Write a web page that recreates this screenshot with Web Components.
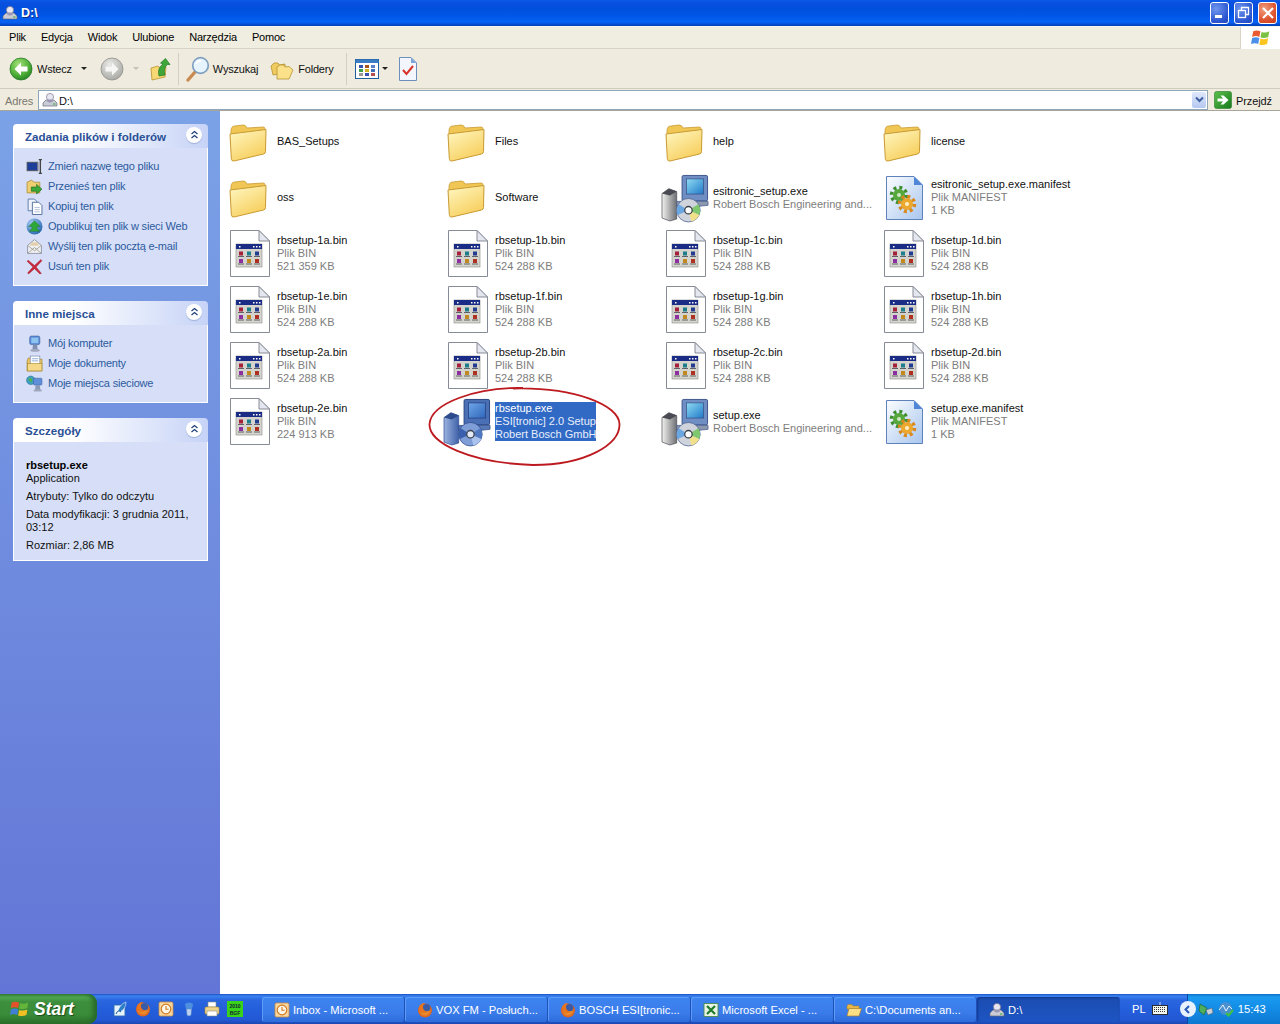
<!DOCTYPE html>
<html lang="pl">
<head>
<meta charset="utf-8">
<title>D:\</title>
<style>
    html, body { margin: 0; padding: 0; overflow: hidden; background: #fff; }
    body { font: 11px "Liberation Sans", Arial, sans-serif; color: #000; }
</style>
</head>
<body>
<xp-window>
    <xp-titlebar slot="title">D:\</xp-titlebar>
    <xp-menubar slot="menu">
        <span>Plik</span><span>Edycja</span><span>Widok</span><span>Ulubione</span><span>Narzędzia</span><span>Pomoc</span>
    </xp-menubar>
    <xp-toolbar slot="tools"></xp-toolbar>
    <xp-addressbar slot="address">D:\</xp-addressbar>
    <xp-sidebar slot="side">
        <xp-task-panel heading="Zadania plików i folderów" pad="8px 0 9px">
            <xp-task-link icon="rename">Zmień nazwę tego pliku</xp-task-link>
            <xp-task-link icon="move">Przenieś ten plik</xp-task-link>
            <xp-task-link icon="copy">Kopiuj ten plik</xp-task-link>
            <xp-task-link icon="publish">Opublikuj ten plik w sieci Web</xp-task-link>
            <xp-task-link icon="mail">Wyślij ten plik pocztą e-mail</xp-task-link>
            <xp-task-link icon="del">Usuń ten plik</xp-task-link>
        </xp-task-panel>
        <xp-task-panel heading="Inne miejsca" pad="8px 0 9px">
            <xp-task-link icon="computer">Mój komputer</xp-task-link>
            <xp-task-link icon="docs">Moje dokumenty</xp-task-link>
            <xp-task-link icon="network">Moje miejsca sieciowe</xp-task-link>
        </xp-task-panel>
        <xp-task-panel heading="Szczegóły" pad="17px 0 8px">
            <xp-details></xp-details>
        </xp-task-panel>
    </xp-sidebar>
    <xp-files slot="files">
        <xp-file icon="folder">BAS_Setups</xp-file>
        <xp-file icon="folder">Files</xp-file>
        <xp-file icon="folder">help</xp-file>
        <xp-file icon="folder">license</xp-file>
        <xp-file icon="folder">oss</xp-file>
        <xp-file icon="folder">Software</xp-file>
        <xp-file icon="setup" line2="Robert Bosch Engineering and...">esitronic_setup.exe</xp-file>
        <xp-file icon="manifest" line2="Plik MANIFEST" line3="1 KB">esitronic_setup.exe.manifest</xp-file>
        <xp-file icon="bin" line2="Plik BIN" line3="521 359 KB">rbsetup-1a.bin</xp-file>
        <xp-file icon="bin" line2="Plik BIN" line3="524 288 KB">rbsetup-1b.bin</xp-file>
        <xp-file icon="bin" line2="Plik BIN" line3="524 288 KB">rbsetup-1c.bin</xp-file>
        <xp-file icon="bin" line2="Plik BIN" line3="524 288 KB">rbsetup-1d.bin</xp-file>
        <xp-file icon="bin" line2="Plik BIN" line3="524 288 KB">rbsetup-1e.bin</xp-file>
        <xp-file icon="bin" line2="Plik BIN" line3="524 288 KB">rbsetup-1f.bin</xp-file>
        <xp-file icon="bin" line2="Plik BIN" line3="524 288 KB">rbsetup-1g.bin</xp-file>
        <xp-file icon="bin" line2="Plik BIN" line3="524 288 KB">rbsetup-1h.bin</xp-file>
        <xp-file icon="bin" line2="Plik BIN" line3="524 288 KB">rbsetup-2a.bin</xp-file>
        <xp-file icon="bin" line2="Plik BIN" line3="524 288 KB">rbsetup-2b.bin</xp-file>
        <xp-file icon="bin" line2="Plik BIN" line3="524 288 KB">rbsetup-2c.bin</xp-file>
        <xp-file icon="bin" line2="Plik BIN" line3="524 288 KB">rbsetup-2d.bin</xp-file>
        <xp-file icon="bin" line2="Plik BIN" line3="224 913 KB">rbsetup-2e.bin</xp-file>
        <xp-file icon="setup-sel" selected line2="ESI[tronic] 2.0 Setup" line3="Robert Bosch GmbH">rbsetup.exe</xp-file>
        <xp-file icon="setup" line2="Robert Bosch Engineering and...">setup.exe</xp-file>
        <xp-file icon="manifest" line2="Plik MANIFEST" line3="1 KB">setup.exe.manifest</xp-file>
    </xp-files>
    <xp-taskbar slot="tasks">
        <xp-task-button icon="clock">Inbox - Microsoft ...</xp-task-button>
        <xp-task-button icon="firefox">VOX FM - Posłuch...</xp-task-button>
        <xp-task-button icon="firefox">BOSCH ESI[tronic...</xp-task-button>
        <xp-task-button icon="excel">Microsoft Excel - ...</xp-task-button>
        <xp-task-button icon="openfolder">C:\Documents an...</xp-task-button>
        <xp-task-button icon="drive" active>D:\</xp-task-button>
    </xp-taskbar>
</xp-window>

<script>
function setupIcon(sel) {
    var c = sel
        ? { tw1: '#9db4e0', tw2: '#3f62a8', top: '#2c4a8c', mon: '#4a6fb5', edge: '#26427f', s1: '#6fa6e8', s2: '#2f66bb', base: '#5878b8', cd: '#7f9ed8', w1: '#4f78c0', w2: '#a9c2ee', w3: '#3a60ad', hole: '#e3ebf8' }
        : { tw1: '#f2f2ef', tw2: '#6f7074', top: '#4a4b52', mon: '#6f8fc4', edge: '#3d5488', s1: '#8fdcf4', s2: '#1f78c8', base: '#8c98ad', cd: '#cfd3dc', w1: '#7fc86f', w2: '#f0e08a', w3: '#6aa6e0', hole: '#ffffff' };
    return `<defs>
        <linearGradient id="tw" x1="0" x2="1" y1="0" y2="0"><stop offset="0" stop-color="${c.tw1}"/><stop offset="1" stop-color="${c.tw2}"/></linearGradient>
        <linearGradient id="sc" x1="0" x2="1" y1="0" y2="1"><stop offset="0" stop-color="${c.s1}"/><stop offset="1" stop-color="${c.s2}"/></linearGradient>
    </defs>
    <path d="M0 21 L7 16 L15 19 V47 L8 49 L0 46Z" fill="url(#tw)" stroke="${c.top}" stroke-width=".7"/>
    <path d="M0 21 L7 16 L15 19 L8 23Z" fill="${c.top}"/>
    <rect x="20.5" y="2.5" width="26" height="26" rx="1.5" fill="${c.mon}" stroke="${c.edge}"/>
    <rect x="25" y="6" width="17.5" height="15.5" fill="url(#sc)" stroke="${c.edge}" stroke-width=".8"/>
    <path d="M15 29 H47 V33 L38 34 H15Z" fill="${c.base}" stroke="${c.edge}" stroke-width=".7"/>
    <circle cx="27" cy="38" r="12" fill="${c.cd}" stroke="${c.edge}" stroke-width=".7"/>
    <path d="M27 38 L37 32 A12 12 0 0 1 38 43Z" fill="${c.w1}"/>
    <path d="M27 38 L38 43 A12 12 0 0 1 30 49.5Z" fill="${c.w2}"/>
    <path d="M27 38 L17 32 A12 12 0 0 0 16 43Z" fill="${c.w3}"/>
    <circle cx="27" cy="38" r="3.8" fill="${c.hole}" stroke="#3b3f4c" stroke-width="1.3"/>`;
}

var ICONS = {
    folder: [48, `<defs><linearGradient id="f" x1="0" x2=".6" y1="0" y2="1"><stop offset="0" stop-color="#fff8c4"/><stop offset="1" stop-color="#f7cf5e"/></linearGradient></defs>
        <path d="M5 14 Q5 9 9 9 L17 8 Q20 8 21 11 L37 10 Q39 10 39 12 V22 L5 24Z" fill="#f0c654" stroke="#c99a32" stroke-width=".8"/>
        <path d="M4 17 L40 12.5 L39.5 34.5 Q39.5 36.5 37.5 37 L8 44 Q5.5 44.5 5.3 41.5Z" fill="url(#f)" stroke="#c99a32"/>`],
    bin: [48, `<path d="M4.5 1.5 H33 L43.5 12 V47.5 H4.5Z" fill="#fff" stroke="#878b96"/>
        <path d="M33 1.5 V12 H43.5Z" fill="#e4e7ef" stroke="#878b96"/>
        <rect x="10" y="15" width="26" height="23" fill="#d4d3cd" stroke="#8a8a86" stroke-width=".6"/>
        <rect x="10" y="15" width="26" height="5" fill="#1b2c86"/>
        <path d="M13 17h1.5v1.5h-1.5zM27 17h1.5v1.5h-1.5zM30 17h1.5v1.5h-1.5zM33 17h1.5v1.5h-1.5z" fill="#fff"/>
        <rect x="13" y="22.5" width="4" height="4" fill="#a3213a"/><rect x="21" y="22.5" width="4" height="4" fill="#1e7f8c"/><rect x="29" y="22.5" width="4" height="4" fill="#243c8f"/>
        <rect x="13" y="30" width="4" height="4" fill="#8c2fa0"/><rect x="21" y="30" width="4" height="4" fill="#c08a20"/><rect x="29" y="30" width="4" height="4" fill="#b03020"/>
        <path d="M12 27.5h6M20 27.5h6M28 27.5h6M12 35h6M20 35h6M28 35h6" stroke="#55555a" stroke-width=".9"/>`],
    setup: [49, setupIcon(false)],
    'setup-sel': [49, setupIcon(true)],
    manifest: [48, `<defs><linearGradient id="p" x1="0" x2="1" y1="0" y2="1"><stop offset="0" stop-color="#fbfdff"/><stop offset="1" stop-color="#a9c6ee"/></linearGradient></defs>
        <path d="M6.5 3.5 H34 L42.5 12 V46.5 H6.5Z" fill="url(#p)" stroke="#5f82ba"/>
        <path d="M34 3.5 V12 H42.5Z" fill="#4f86d8"/>
        <circle cx="19" cy="22" r="6" fill="#57a83c"/><circle cx="19" cy="22" r="7.5" fill="none" stroke="#3f8f2e" stroke-width="3.5" stroke-dasharray="3 2.9"/>
        <circle cx="19" cy="22" r="2" fill="#cfe8c0"/>
        <circle cx="27" cy="31" r="6" fill="#eda92f"/><circle cx="27" cy="31" r="7.5" fill="none" stroke="#d9891c" stroke-width="3.5" stroke-dasharray="3 2.9"/>
        <circle cx="27" cy="31" r="2" fill="#fff0c8"/>`],
    drive: [16, `<path d="M1 11 L4 8 H12 L15 11 V14 H1Z" fill="#c9ccd6" stroke="#666a78" stroke-width=".7"/>
        <circle cx="8" cy="5" r="3.6" fill="#e8e6f0" stroke="#7e7a92" stroke-width=".7"/>
        <path d="M5 9.5 Q8 11.5 11 9.5 L9.5 7.5 H6.5Z" fill="#9a96b4"/>
        <path d="M11 12h2.5" stroke="#3a3" stroke-width="1"/>`],
    back: [24, `<defs><radialGradient id="g" cx=".4" cy=".3" r=".8"><stop offset="0" stop-color="#a5e27a"/><stop offset=".6" stop-color="#4cae35"/><stop offset="1" stop-color="#1c7a1e"/></radialGradient></defs>
        <circle cx="12" cy="12" r="11" fill="url(#g)" stroke="#2a7a2a" stroke-width=".8"/>
        <path d="M5.5 12 L12 5.5 V9.5 H18.5 V14.5 H12 V18.5Z" fill="#fff"/>`],
    forward: [24, `<defs><radialGradient id="g" cx=".4" cy=".3" r=".8"><stop offset="0" stop-color="#e9e9e6"/><stop offset="1" stop-color="#a2a29e"/></radialGradient></defs>
        <circle cx="12" cy="12" r="11" fill="url(#g)" stroke="#8f8f8c" stroke-width=".8"/>
        <path d="M18.5 12 L12 5.5 V9.5 H5.5 V14.5 H12 V18.5Z" fill="#f6f6f4"/>`],
    up: [24, `<path d="M3 11 L10 9 L12 11 L18 10 L17 20 L4 23Z" fill="#f8d874" stroke="#b8922e" stroke-width=".8"/>
        <path d="M11 19 Q9 11 15 7 L12.5 6 L17.5 1.5 L22 7.5 L19.5 7.5 Q15 11 17 18Z" fill="#3fa63a" stroke="#1f7a22" stroke-width=".7"/>`],
    search: [26, `<path d="M3 24 L10 16" stroke="#c98a50" stroke-width="3.4" stroke-linecap="round"/>
        <circle cx="15.5" cy="9.5" r="7.8" fill="#e6f4fd" stroke="#7f9fc0" stroke-width="1.7"/>
        <path d="M11 8 Q12.5 5 16 4.8" stroke="#fff" stroke-width="1.6" fill="none"/>`],
    folders: [24, `<path d="M1 9 L4 6 L8 6 L9 8 L15 7 V16 L3 18Z" fill="#f0cb62" stroke="#b8922e" stroke-width=".8"/>
        <path d="M7 10 L10 8 L14 8 L15 10 L19 9.5 L23 13 L19 22 L7 22Z" fill="#fbe18a" stroke="#b8922e" stroke-width=".8"/>`],
    views: [24, `<rect x=".5" y="2.5" width="23" height="19" fill="#fff" stroke="#1f5f9f"/><rect x=".5" y="2.5" width="23" height="3.5" fill="#3b7cc4"/>
        <g><rect x="4" y="8" width="4" height="3" fill="#3a50b0"/><rect x="10" y="8" width="4" height="3" fill="#a8541e"/><rect x="16" y="8" width="4" height="3" fill="#5a7fc8"/>
        <rect x="4" y="12" width="4" height="3" fill="#3ea04a"/><rect x="10" y="12" width="4" height="3" fill="#d4b21e"/><rect x="16" y="12" width="4" height="3" fill="#3f6fb8"/>
        <rect x="4" y="16" width="4" height="3" fill="#9a9a9a"/><rect x="10" y="16" width="4" height="3" fill="#3a50b0"/><rect x="16" y="16" width="4" height="3" fill="#b05050"/></g>`],
    check: [24, `<path d="M3.5 .5 H15 L20.5 6 V23.5 H3.5Z" fill="#f3f7fd" stroke="#6d8fbe"/>
        <path d="M15 .5 V6 H20.5Z" fill="#7ba6dc"/>
        <path d="M7 13 L10.5 17 L17 9" fill="none" stroke="#d8322a" stroke-width="2"/>`],
    go: [18, `<defs><linearGradient id="g" x1="0" x2="1" y1="0" y2="1"><stop offset="0" stop-color="#5cc04c"/><stop offset="1" stop-color="#157a1a"/></linearGradient></defs>
        <rect x=".5" y=".5" width="17" height="17" rx="2" fill="url(#g)" stroke="#2a7a2a" stroke-width=".6"/>
        <path d="M3.5 7.5 H9 L6.5 4.5 H9.5 L14.5 9 L9.5 13.5 H6.5 L9 10.5 H3.5Z" fill="#fff"/>`],
    rename: [16, `<rect x="1" y="4" width="10" height="8" fill="#1d3f9a" stroke="#555" stroke-width=".8"/>
        <path d="M12 1.5h3M13.5 1.5v13M12 14.5h3" stroke="#444" stroke-width="1.3"/><path d="M11 4h1.5v8H11" fill="#aab"/>`],
    move: [16, `<path d="M1 4 L5 2 L8 4 H13 V14 H1Z" fill="#f0cf72" stroke="#a88a30" stroke-width=".7"/>
        <path d="M5 8.5 H10 V6 L15 10.5 L10 15 V12.5 H5Z" fill="#3ca838" stroke="#1c6a20" stroke-width=".6"/>`],
    copy: [16, `<path d="M2 1 H8 L10 3 V12 H2Z" fill="#eef2fb" stroke="#4f6f9f" stroke-width=".8"/>
        <path d="M6 4 H12 L15 7 V15.5 H6Z" fill="#fff" stroke="#3f5f8f" stroke-width=".8"/>
        <path d="M8 9h5M8 11h5M8 13h5" stroke="#9cb0d0" stroke-width=".7"/>`],
    publish: [16, `<defs><radialGradient id="g" cx=".35" cy=".3" r=".8"><stop offset="0" stop-color="#a8d0f4"/><stop offset="1" stop-color="#1f5fb0"/></radialGradient></defs>
        <circle cx="8" cy="8" r="7.5" fill="url(#g)"/>
        <path d="M8 2.5 L13.5 8 H10.5 V10 L13 12.5 H3 L5.5 10 V8 H2.5Z" fill="#2fa83a" stroke="#1a6e28" stroke-width=".4"/>`],
    mail: [16, `<path d="M1.5 7 L8 1.5 L14.5 7 V14.5 H1.5Z" fill="#eef0f6" stroke="#8a8fa0" stroke-width=".8"/>
        <path d="M1.5 14.5 L8 9 L14.5 14.5M1.5 7 L8 12 L14.5 7" fill="none" stroke="#a09c88" stroke-width=".8"/>
        <path d="M4 6.5h8M5 4.8h6" stroke="#d8b060" stroke-width=".8"/>`],
    del: [16, `<path d="M2 2 L8 7 L14 1.5 L15 2.5 L9.5 8.5 L14.5 14.5 L13 15 L8 10 L2.5 15 L1.5 14 L6.5 8.5 L1 3Z" fill="#c8283a" stroke="#9a1a2a" stroke-width=".4"/>`],
    computer: [16, `<rect x="3.5" y="1" width="9.5" height="8" rx="1.5" fill="#5f8fd8" stroke="#3a5f9f" stroke-width=".6"/>
        <rect x="5" y="2.5" width="6.5" height="5" fill="#8fc4f0"/>
        <path d="M6.5 9 H10.5 L11 15 H6Z" fill="#7f8fb0"/><ellipse cx="8.5" cy="14.5" rx="4.5" ry="1.3" fill="#a0a8be"/>`],
    docs: [16, `<path d="M1 6 L2 3 H6 L7 4 H15 V15 H1Z" fill="#efc55f" stroke="#a88a30" stroke-width=".7"/>
        <rect x="4" y="1" width="9" height="9" fill="#fff" stroke="#7f8fae" stroke-width=".7"/>
        <path d="M5.5 3.5h6M5.5 5.5h6" stroke="#7f9fd0" stroke-width=".8"/>
        <rect x="1.5" y="8" width="13.5" height="7" fill="#f5d98a" stroke="#a88a30" stroke-width=".6"/>`],
    network: [16, `<circle cx="4.5" cy="5" r="4" fill="#3fa0c0" stroke="#2a6a8a" stroke-width=".5"/><path d="M2 4 Q4 2 6 4 L5 7Z" fill="#50b04a"/>
        <rect x="7" y="3" width="8" height="6.5" rx="1" fill="#5f8fd8" stroke="#3a5f9f" stroke-width=".5"/>
        <path d="M9 9.5h4l.5 4.5H8.5Z" fill="#8c9ab8"/><ellipse cx="11" cy="14.5" rx="4" ry="1.1" fill="#a0a8be"/>`],
    flag: [24, `<path d="M3 5 Q7 3 11 5 L10 11 Q6 9 2 11Z" fill="#e2512a"/><path d="M12 5.5 Q16 7.5 21 5 L20 11 Q16 13 11 11.5Z" fill="#63b63a"/>
        <path d="M2 12.5 Q6 10.5 10 12.5 L9 18.5 Q5 16.5 1 18.5Z" fill="#3f7fd6"/><path d="M11 13 Q15 14.5 20 12.5 L19 18.5 Q15 20.5 10 19Z" fill="#f0c022"/>`],
    winflag: [18, `<path d="M2 3 Q5 1.5 8.5 3 L7.5 8 Q4.5 6.5 1 8Z" fill="#ea5a30"/><path d="M9.5 3.5 Q13 5 16.5 3 L15.5 8 Q12 9.5 8.5 8.5Z" fill="#7ac143"/>
        <path d="M1 9 Q4.5 7.5 7.5 9 L6.5 14.5 Q3.5 13 0 14.5Z" fill="#4b8fe8"/><path d="M8.5 9.5 Q12 11 15.5 9 L14.5 14.5 Q11 16 7.5 15Z" fill="#fbc520"/>`],
    ql1: [16, `<path d="M2 4 H10 L13 7 V15 H2Z" fill="#e6f2fc" stroke="#2f6db0" stroke-width=".9"/><path d="M6 10 Q8 3 14 1 Q14 8 8 11Z" fill="#2f7fc8" stroke="#fff" stroke-width=".5"/><path d="M4 13 Q6 8 9 11" stroke="#1f5f9f" fill="none"/>`],
    firefox: [16, `<defs><radialGradient id="g" cx=".5" cy=".5" r=".55"><stop offset="0" stop-color="#f8c040"/><stop offset="1" stop-color="#d8531a"/></radialGradient></defs>
        <circle cx="8" cy="8.5" r="7" fill="url(#g)"/><circle cx="9.5" cy="5.8" r="3.8" fill="#3a5ba8"/><path d="M2 6 Q3 1 8 1 Q5 2.5 6 6 Q7 9.5 11 9.5 Q9 12 6 11 Q3 10 2 6Z" fill="#e8741e"/>`],
    clock: [16, `<rect x="1" y="1" width="14" height="14" rx="1.5" fill="#f8d6a0" stroke="#c88a40" stroke-width=".8"/>
        <circle cx="8" cy="8" r="4.8" fill="#fdf6e6" stroke="#d07a20" stroke-width="1.2"/><path d="M8 5v3.3h2.6" fill="none" stroke="#d07a20" stroke-width="1.1"/>`],
    bin2: [16, `<path d="M4 3 Q8 0 12 3 L11 8 Q8 10 5 8Z" fill="#4f8fe0"/><path d="M5.5 8 H10.5 L10 14 Q8 16 6 14Z" fill="#bcd2f0" stroke="#5f8fc8" stroke-width=".6"/>`],
    printer: [16, `<path d="M4 1 H12 V6 H4Z" fill="#fff" stroke="#8a8a88" stroke-width=".6"/><rect x="1" y="6" width="14" height="7" rx="1" fill="#f0d48a" stroke="#a88a30" stroke-width=".6"/><rect x="3" y="10" width="10" height="5" fill="#fff" stroke="#8a8a88" stroke-width=".6"/>`],
    excel: [16, `<rect x="1" y="1.5" width="14" height="13" fill="#e8f3e4" stroke="#4a8a50" stroke-width=".9"/><path d="M4 4 L12 12 M12 4 L4 12" stroke="#1f7a2a" stroke-width="2.2"/>`],
    openfolder: [16, `<path d="M1 4 L2 2.5 H6 L7 4 H13 V7 H1Z" fill="#e8b94a" stroke="#a88030" stroke-width=".6"/><path d="M1 14 L3 6.5 H15.5 L13 14Z" fill="#fbdf85" stroke="#a88030" stroke-width=".7"/>`],
    keyboard: [16, `<rect x=".5" y="4.5" width="15" height="9" fill="#f5f5f0" stroke="#222" stroke-width=".9"/><path d="M2 6.5h12M2 8.5h12M2 10.5h12" stroke="#222" stroke-width=".9" stroke-dasharray="1 1"/><path d="M8 4 V1" stroke="#ddd"/>`],
    tray1: [16, `<path d="M2 3 L9 7 L6 14 L1 10Z" fill="#4fae5a" stroke="#1a5a2a" stroke-width=".6"/><path d="M8 9 L14 7 L15 12 L10 14Z" fill="#c8d0d8" stroke="#555" stroke-width=".5"/>`],
    tray2: [16, `<circle cx="7.5" cy="7.5" r="6.5" fill="#4a8fd0"/><path d="M1 9 L5 4 L8 10 L11 5 L14 8" stroke="#e8f4ff" fill="none"/><path d="M8 12 L10.5 14.5 L15 9" stroke="#3fc040" stroke-width="2" fill="none"/>`]
};

// one element for every icon, the name picks the drawing
class XpIcon extends HTMLElement {
    connectedCallback() {
        if (this.shadowRoot) return;
        var entry = ICONS[this.getAttribute('name')];
        var size = this.getAttribute('size') || entry[0];
        this.attachShadow({ mode: 'open' }).innerHTML = `
        <style>:host { display: block; flex: none; width: ${size}px; height: ${size}px; } svg { display: block; overflow: visible; }</style>
        <svg width="${size}" height="${size}" viewBox="0 0 ${entry[0]} ${entry[0]}">${entry[1]}</svg>`;
    }
}
customElements.define('xp-icon', XpIcon);

function simple(name, html) {
    var tpl = document.createElement('template');
    tpl.innerHTML = html;
    customElements.define(name, class extends HTMLElement {
        constructor() {
            super();
            this.attachShadow({ mode: 'open' }).appendChild(tpl.content.cloneNode(true));
        }
    });
}

simple('xp-window', `
<style>
    :host { display: grid; width: 1280px; height: 1024px; overflow: hidden; position: relative;
        grid-template-columns: 220px 1fr; grid-template-rows: 26px 23px 40px 22px 1fr 30px; }
    ::slotted([slot=title]), ::slotted([slot=menu]), ::slotted([slot=tools]), ::slotted([slot=address]), ::slotted([slot=tasks]) { grid-column: 1 / 3; }
    svg { position: absolute; left: 425px; top: 383px; }
</style>
<slot name="title"></slot><slot name="menu"></slot><slot name="tools"></slot><slot name="address"></slot>
<slot name="side"></slot><slot name="files"></slot><slot name="tasks"></slot>
<svg width="200" height="88" viewBox="0 0 200 88">
    <path d="M98 5 C52 4 6 20 4.5 41 C3.5 60 45 80 108 82 C160 82 195 62 194.5 41 C194 22 150 4 88 5.5" fill="none" stroke="#bd1a20" stroke-width="1.8"/>
</svg>
`);

simple('xp-titlebar', `
<style>
    :host { display: flex; align-items: center; color: #fff; font: bold 12.5px "Liberation Sans", sans-serif; padding-left: 2px;
        background: linear-gradient(#0a5ae8 0, #0a4fe0 3px, #0250dc 8px, #0155e8 16px, #0463f5 22px, #0346c8 25px, #0240b0 26px);
        text-shadow: 1px 1px #0f2f90; }
    .text { margin-left: 3px; margin-top: -1px; }
    .buttons { margin-left: auto; display: flex; gap: 5px; padding: 0 3px 1px 0; }
    .b { width: 17px; height: 20px; border: 1px solid #fff; border-radius: 3px; display: flex; align-items: center; justify-content: center;
        background: radial-gradient(circle at 30% 30%, #6f96ee, #2a55d0 70%, #2347b8); }
    .x { background: radial-gradient(circle at 30% 30%, #f0a080, #de5430 60%, #c83c18); }
</style>
<xp-icon name="drive"></xp-icon><span class="text"><slot></slot></span>
<div class="buttons">
    <div class="b"><svg width="13" height="13"><rect x="2" y="9" width="7" height="3" fill="#fff"/></svg></div>
    <div class="b"><svg width="13" height="13" fill="none" stroke="#fff" stroke-width="1.3"><rect x="1.5" y="4.5" width="7" height="7"/><path d="M4.5 4V1.5h7v7H9"/></svg></div>
    <div class="b x"><svg width="14" height="14" stroke="#fff" stroke-width="2.2"><path d="M2 2 12 12M12 2 2 12"/></svg></div>
</div>
`);

simple('xp-menubar', `
<style>
    :host { display: flex; align-items: center; background: #f0eee1; border-bottom: 1px solid #d8d5c6; border-top: 1px solid #f6f5ee; box-sizing: border-box; padding-left: 9px; letter-spacing: -.2px; }
    ::slotted(span) { margin-right: 15px; padding-bottom: 2px; }
    .logo { margin-left: auto; width: 39px; height: 22px; background: #fff; display: flex; align-items: center; justify-content: center; border-left: 1px solid #d8d5c6; }
</style>
<slot></slot>
<div class="logo"><xp-icon name="winflag" size="20"></xp-icon></div>
`);

simple('xp-toolbar', `
<style>
    :host { display: flex; align-items: center; background: #efecdf; border-bottom: 1px solid #cfccbd; box-sizing: border-box; padding-left: 9px; color: #111; letter-spacing: -.2px; }
    span { white-space: nowrap; }
    .caret { width: 0; height: 0; border: 3px solid transparent; border-top: 3.5px solid #222; border-bottom: 0; }
    .caret.off { border-top-color: #c4c2b6; }
    .sep { width: 1px; height: 32px; background: #d3d0c1; }
</style>
<xp-icon name="back" size="24"></xp-icon>
<span style="margin-left:4px">Wstecz</span>
<div class="caret" style="margin-left:9px"></div>
<xp-icon name="forward" size="24" style="margin-left:13px"></xp-icon>
<div class="caret off" style="margin-left:9px"></div>
<xp-icon name="up" size="24" style="margin-left:9px"></xp-icon>
<div class="sep" style="margin-left:6px"></div>
<xp-icon name="search" size="26" style="margin-left:6px"></xp-icon>
<span style="margin-left:2px">Wyszukaj</span>
<xp-icon name="folders" size="24" style="margin-left:12px"></xp-icon>
<span style="margin-left:4px">Foldery</span>
<div class="sep" style="margin-left:12px"></div>
<xp-icon name="views" size="24" style="margin-left:8px"></xp-icon>
<div class="caret" style="margin-left:3px"></div>
<xp-icon name="check" size="24" style="margin-left:8px"></xp-icon>
`);

simple('xp-addressbar', `
<style>
    :host { display: flex; align-items: center; background: #efecdf; box-sizing: border-box; padding-left: 5px; color: #111; border-bottom: 1px solid #a8a698; letter-spacing: -.1px; }
    .label { color: #7a786e; width: 33px; padding-top: 2px; }
    .input { width: 1170px; height: 20px; background: #fff; box-sizing: border-box; border: 1px solid #8ea6b9; display: flex; align-items: center; padding-left: 3px; gap: 1px; }
    .input span { padding-top: 2px; }
    .arrow { margin-left: auto; width: 14px; height: 16px; margin-right: 1px; background: linear-gradient(#dfe8fb, #b4c8f2); border-radius: 2px; display: flex; align-items: center; justify-content: center; }
    xp-icon[name=go] { margin-left: 6px; }
    .go { margin-left: 4px; padding-top: 2px; }
</style>
<span class="label">Adres</span>
<div class="input">
    <xp-icon name="drive"></xp-icon><span><slot></slot></span>
    <div class="arrow"><svg width="9" height="7" fill="none" stroke="#3f5f9f" stroke-width="2"><path d="M1 1.5 4.5 5 8 1.5"/></svg></div>
</div>
<xp-icon name="go"></xp-icon><span class="go">Przejdź</span>
`);

simple('xp-sidebar', `
<style>
    :host { display: flex; flex-direction: column; gap: 15px; padding: 13px 12px 0 13px; box-sizing: border-box; background: linear-gradient(#7ba2e7, #6375d6); min-height: 0; overflow: hidden; }
</style>
<slot></slot>
`);

class XpTaskPanel extends HTMLElement {
    connectedCallback() {
        if (this.shadowRoot) return;
        this.attachShadow({ mode: 'open' }).innerHTML = `
        <style>
            :host { display: block; }
            .head { height: 24px; box-sizing: border-box; border-radius: 4px 4px 0 0; background: linear-gradient(90deg, #fff 30%, #c6d3f7); display: flex; align-items: center; padding: 0 6px 0 12px; justify-content: space-between;
                color: #2a4f96; font: bold 11.6px "Liberation Sans", sans-serif; }
            .head span { padding-top: 1px; }
            .btn { width: 16px; height: 16px; border-radius: 50%; background: #fff; box-shadow: 0 1px 1px #9fb0d8; display: flex; align-items: center; justify-content: center; margin-top: -3px; }
            .body { background: #d6dff7; border: 1px solid #fff; border-top: 0; padding: ${this.getAttribute('pad')}; }
        </style>
        <div class="head"><span>${this.getAttribute('heading')}</span>
            <div class="btn"><svg width="9" height="9" fill="none" stroke="#1f3f78" stroke-width="1.2"><path d="M1.5 4 4.5 1.5 7.5 4M1.5 8 4.5 5.5 7.5 8"/></svg></div>
        </div>
        <div class="body"><slot></slot></div>`;
    }
}
customElements.define('xp-task-panel', XpTaskPanel);

class XpTaskLink extends HTMLElement {
    connectedCallback() {
        if (this.shadowRoot) return;
        this.attachShadow({ mode: 'open' }).innerHTML = `
        <style>
            :host { display: flex; align-items: center; height: 20px; padding-left: 12px; gap: 5px; color: #2c5a9e; white-space: nowrap; letter-spacing: -.2px; }
        </style>
        <xp-icon name="${this.getAttribute('icon')}" size="17"></xp-icon><span><slot></slot></span>`;
    }
}
customElements.define('xp-task-link', XpTaskLink);

simple('xp-details', `
<style>
    :host { display: block; padding: 0 12px; line-height: 13px; color: #111; }
    b { display: block; font-weight: bold; color: #000; }
    p { margin: 5px 0 0; }
</style>
<b>rbsetup.exe</b>
<div>Application</div>
<p>Atrybuty: Tylko do odczytu</p>
<p>Data modyfikacji: 3 grudnia 2011,<br>03:12</p>
<p>Rozmiar: 2,86 MB</p>
`);

simple('xp-files', `
<style>
    :host { display: grid; grid-template-columns: repeat(4, 218px); grid-auto-rows: 56px; align-content: start; padding: 2px 0 0 6px; background: #fff; min-height: 0; overflow: hidden; }
</style>
<slot></slot>
`);

class XpFile extends HTMLElement {
    connectedCallback() {
        if (this.shadowRoot) return;
        var sel = this.hasAttribute('selected');
        var metas = ['line2', 'line3'].filter(a => this.hasAttribute(a));
        var lines = metas.map(a => `<div class="meta">${this.getAttribute(a)}</div>`).join('');
        this.attachShadow({ mode: 'open' }).innerHTML = `
        <style>
            :host { display: flex; align-items: center; white-space: nowrap; line-height: 13px; color: #111; }
            .text { margin: ${metas.length === 1 ? '2px' : '0'} 0 0 3px; }
            .meta { color: #7d7d7d; }
            .sel { background: #316ac5; color: #fff; }
            .sel .meta { color: #e8eefa; }
        </style>
        <xp-icon name="${this.getAttribute('icon')}" size="48"></xp-icon>
        <div class="text ${sel ? 'sel' : ''}"><div><slot></slot></div>${lines}</div>`;
    }
}
customElements.define('xp-file', XpFile);

simple('xp-taskbar', `
<style>
    :host { display: flex; align-items: stretch; color: #fff; font-size: 11.2px;
        background: linear-gradient(#1c50c4 0, #3a82f0 2px, #2a66e0 6px, #245edb 16px, #2358d4 26px, #1b48b0 30px); }
    .start { flex: none; width: 97px; display: flex; align-items: center; box-sizing: border-box; padding-left: 9px; gap: 3px; border-radius: 0 9px 9px 0;
        background: linear-gradient(#3a8a3a 0, #4fa84f 3px, #3d8f3d 8px, #3a8c3a 20px, #2a702a 30px);
        font: italic bold 17.5px "Liberation Sans", sans-serif; text-shadow: 1px 1px 1px #1a4a1a; box-shadow: inset -4px 0 4px #2a6a2a; }
    .quick { flex: none; width: 165px; display: flex; align-items: center; padding-left: 15px; box-sizing: border-box; gap: 7px; }
    .tasks { flex: none; display: flex; }
    .tray { flex: 1; min-width: 0; display: flex; align-items: center; padding-left: 12px; }
    .time { margin-left: 19px; height: 100%; flex: 1; display: flex; align-items: center; box-sizing: border-box;
        background: linear-gradient(#0f70c8 0, #1a9af0 3px, #138ce6 15px, #0e78d0 30px); border-left: 1px solid #0a4a9a; }
    .chev { flex: none; width: 16px; height: 16px; border-radius: 50%; background: #e8f2ff; display: flex; align-items: center; justify-content: center; margin: 0 2px 0 -8px; }
    .clock { margin-left: 4px; }
</style>
<div class="start"><xp-icon name="flag" size="22"></xp-icon><span>Start</span></div>
<div class="quick">
    <xp-icon name="ql1"></xp-icon><xp-icon name="firefox"></xp-icon><xp-icon name="clock"></xp-icon>
    <xp-icon name="bin2"></xp-icon><xp-icon name="printer"></xp-icon>
    <svg width="16" height="16"><rect width="16" height="16" fill="#39d41a"/><text x="8" y="7" text-anchor="middle" font-family="Liberation Sans" font-size="5" font-weight="bold" fill="#123">2010</text><text x="8" y="13.5" text-anchor="middle" font-family="Liberation Sans" font-size="5" font-weight="bold" fill="#123">BGF</text></svg>
</div>
<div class="tasks"><slot></slot></div>
<div class="tray">
    <span>PL</span><xp-icon name="keyboard" style="margin-left:6px"></xp-icon>
    <div class="time">
        <div class="chev"><svg width="9" height="9" fill="none" stroke="#2a5ab8" stroke-width="2"><path d="M6 1 2.5 4.5 6 8"/></svg></div>
        <xp-icon name="tray1"></xp-icon><xp-icon name="tray2" style="margin-left:4px"></xp-icon><span class="clock">15:43</span>
    </div>
</div>
`);

class XpTaskButton extends HTMLElement {
    connectedCallback() {
        if (this.shadowRoot) return;
        var active = this.hasAttribute('active');
        this.attachShadow({ mode: 'open' }).innerHTML = `
        <style>
            :host { display: flex; align-items: center; width: 143px; box-sizing: border-box; padding-left: 12px; gap: 3px; white-space: nowrap; overflow: hidden;
                margin: 3px 0 2px; border-radius: 3px; background: ${active ? 'linear-gradient(#1b4cb0, #1e55c4)' : 'linear-gradient(#3d85f0, #3a7cea 60%, #2f6cdc)'};
                border-right: 1px solid #1f4fb8; box-shadow: ${active ? 'inset 1px 1px 2px #123a8c' : 'inset 1px 1px 0 #5c9cf6'}; }
        </style>
        <xp-icon name="${this.getAttribute('icon')}"></xp-icon><span><slot></slot></span>`;
    }
}
customElements.define('xp-task-button', XpTaskButton);
</script>
</body>
</html>
